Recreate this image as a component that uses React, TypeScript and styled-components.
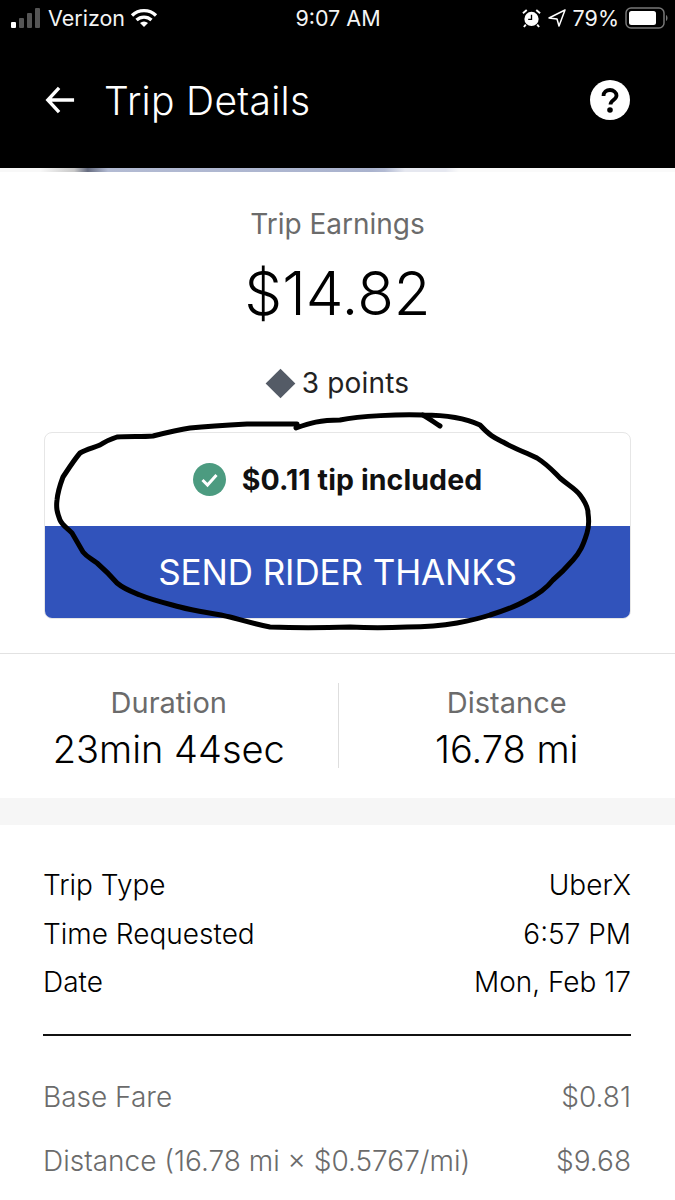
import React from 'react';
import styled, { createGlobalStyle } from 'styled-components';

const GlobalStyle = createGlobalStyle`
  html, body {
    margin: 0;
    padding: 0;
    background: #fff;
    font-family: Inter, "Liberation Sans", sans-serif;
  }
`;

const Screen = styled.div`
  position: relative;
  width: 675px;
  height: 1200px;
  overflow: hidden;
  background: #fff;
`;

const Header = styled.header`
  height: 168px;
  background: #000;
  color: #fff;
  display: flex;
  flex-direction: column;
`;

const StatusBar = styled.div`
  height: 36px;
  display: grid;
  grid-template-columns: 1fr auto 1fr;
  align-items: center;
  padding: 0 6px 0 7px;
  font-size: 21.5px;
  color: #f4f4f4;
`;

const StatusGroup = styled.div<{ $end?: boolean }>`
  display: flex;
  align-items: center;
  gap: ${(p) => (p.$end ? '6px' : '5px')};
  padding-left: ${(p) => (p.$end ? '0' : '4px')};
  justify-content: ${(p) => (p.$end ? 'flex-end' : 'flex-start')};
`;

const NavBar = styled.div`
  display: flex;
  align-items: center;
  height: 60px;
  margin-top: 34px;
  padding: 0 45px;
`;

const Title = styled.h1`
  margin: 0 0 0 29px;
  flex: 1;
  font-size: 39px;
  font-weight: 300;
  letter-spacing: 0.3px;
`;

const MapStrip = styled.div`
  height: 4px;
  background: linear-gradient(90deg, #f8f8f8 0, #f8f8f8 6%, #c8c8c8 11%, #666c80 13%, #b3bbd3 16%, #aab3ce 55%, #b3bbd3 57%, #e6e8f0 60%, #e6e8f0 66%, #fafafa 68%, #fafafa 100%);
`;

const Earnings = styled.section`
  display: flex;
  flex-direction: column;
  align-items: center;
  padding-top: 34px;
`;

const EarningsLabel = styled.div`
  font-size: 28px;
  line-height: 36px;
  color: #6b6b6b;
`;

const Amount = styled.div`
  margin-top: 15px;
  font-size: 60px;
  line-height: 72px;
  font-weight: 300;
  color: #000;
`;

const Points = styled.div`
  margin-top: 36px;
  display: flex;
  align-items: center;
  gap: 7px;
  font-size: 28px;
  line-height: 36px;
  letter-spacing: 0.2px;
  color: #222;
`;

const Diamond = styled.span`
  width: 21px;
  height: 21px;
  background: #545b66;
  transform: rotate(45deg);
  margin: 0 4px;
`;

const TipCard = styled.div`
  margin: 31px 44px 0;
  border: 1px solid #e6e6e6;
  border-radius: 8px;
  overflow: hidden;
`;

const TipRow = styled.div`
  height: 93px;
  display: flex;
  align-items: center;
  justify-content: center;
  gap: 16px;
  font-size: 28.5px;
  font-weight: 700;
  letter-spacing: 0.1px;
  color: #111;
`;

const ThanksButton = styled.button`
  display: block;
  width: 100%;
  height: 92px;
  border: 0;
  background: #3153bb;
  color: #fff;
  font: 400 35px Inter, "Liberation Sans", sans-serif;
  letter-spacing: -0.1px;
`;

const Stats = styled.section`
  margin-top: 34px;
  border-top: 1px solid #e2e2e2;
  padding: 29px 0 30px;
  display: grid;
  grid-template-columns: 1fr 1fr;
`;

const Stat = styled.div<{ $divided?: boolean }>`
  height: 85px;
  text-align: center;
  border-left: ${(p) => (p.$divided ? '1px solid #dedede' : '0')};
`;

const StatLabel = styled.div`
  font-size: 29px;
  line-height: 40px;
  color: #6b6b6b;
`;

const StatValue = styled.div`
  font-size: 38px;
  line-height: 52px;
  font-weight: 300;
  color: #000;
`;

const Band = styled.div`
  height: 27px;
  background: #f6f6f6;
`;

const Details = styled.section`
  padding: 36px 44px 0 43px;
`;

const Row = styled.div<{ $muted?: boolean; $height: number }>`
  display: flex;
  justify-content: space-between;
  align-items: center;
  height: ${(p) => p.$height}px;
  font-size: 28px;
  font-weight: 300;
  color: ${(p) => (p.$muted ? '#6b6b6b' : '#000')};
`;

const Rule = styled.hr`
  margin: 28px 0 37px;
  border: 0;
  border-top: 2px solid #111;
`;

const Scribble = styled.svg`
  position: absolute;
  left: 0;
  top: 0;
  pointer-events: none;
`;

const SignalIcon = () => (
  <svg width="32" height="22" viewBox="0 0 32 22">
    <rect x="0" y="15" width="5" height="6" rx="1" fill="#fff" />
    <rect x="8" y="11" width="5" height="10" rx="1" fill="#555" />
    <rect x="16" y="6" width="5" height="15" rx="1" fill="#555" />
    <rect x="24" y="1" width="5" height="20" rx="1" fill="#555" />
  </svg>
);

const WifiIcon = () => (
  <svg width="28" height="20" viewBox="0 0 28 20" fill="none" stroke="#fff" strokeWidth="3.2">
    <path d="M2 7.5a17 17 0 0 1 24 0" />
    <path d="M6.5 12a11 11 0 0 1 15 0" />
    <path d="M14 19l-4-4a6 6 0 0 1 8 0z" fill="#fff" stroke="none" />
  </svg>
);

const AlarmIcon = () => (
  <svg width="19" height="20" viewBox="0 0 20 20">
    <circle cx="10" cy="11" r="7.5" fill="#fff" />
    <path d="M10 6.5V11.5H6.5" fill="none" stroke="#000" strokeWidth="1.4" />
    <path d="M1 5l4-3.5M19 5l-4-3.5M4 17l-2 2.5M16 17l2 2.5" stroke="#fff" strokeWidth="2" />
  </svg>
);

const LocationIcon = () => (
  <svg width="20" height="20" viewBox="0 0 20 20" fill="none" stroke="#fff" strokeWidth="1.5" strokeLinejoin="round">
    <path d="M18 2L2 10l8 1 2 7z" />
  </svg>
);

const BatteryIcon = () => (
  <svg width="44" height="22" viewBox="0 0 44 22">
    <rect x="1" y="1" width="38" height="20" rx="5" fill="none" stroke="#777" strokeWidth="1.5" />
    <rect x="4" y="4" width="27" height="14" rx="2.5" fill="#fff" />
    <path d="M41 8c2 1 2 5 0 6z" fill="#777" />
  </svg>
);

const BackIcon = () => (
  <svg width="30" height="30" viewBox="0 0 32 30" fill="none" stroke="#fff" strokeWidth="3.6">
    <path d="M31 15H3M15 2L3 15l12 13" />
  </svg>
);

const HelpIcon = () => (
  <svg width="40" height="40" viewBox="0 0 40 40">
    <circle cx="20" cy="20" r="20" fill="#fff" />
    <path d="M13.5 16c0-4 3-6 6.5-6s6.5 2.5 6.5 5.5c0 4.5-6 4.5-6 9" fill="none" stroke="#000" strokeWidth="3.8" />
    <circle cx="20" cy="30" r="2.8" fill="#000" />
  </svg>
);

const CheckIcon = () => (
  <svg width="33" height="33" viewBox="0 0 33 33">
    <circle cx="16.5" cy="16.5" r="16.5" fill="#4c9b80" />
    <path d="M9.5 17l5 5 9-10" fill="none" stroke="#fff" strokeWidth="3" />
  </svg>
);

export default function App() {
  return (
    <Screen>
      <GlobalStyle />
      <Header>
        <StatusBar>
          <StatusGroup>
            <SignalIcon />
            <span>Verizon</span>
            <WifiIcon />
          </StatusGroup>
          <span>9:07 AM</span>
          <StatusGroup $end>
            <AlarmIcon />
            <LocationIcon />
            <span>79%</span>
            <BatteryIcon />
          </StatusGroup>
        </StatusBar>
        <NavBar>
          <BackIcon />
          <Title>Trip Details</Title>
          <HelpIcon />
        </NavBar>
      </Header>
      <MapStrip />
      <Earnings>
        <EarningsLabel>Trip Earnings</EarningsLabel>
        <Amount>$14.82</Amount>
        <Points>
          <Diamond />3 points
        </Points>
      </Earnings>
      <TipCard>
        <TipRow>
          <CheckIcon />
          $0.11 tip included
        </TipRow>
        <ThanksButton>SEND RIDER THANKS</ThanksButton>
      </TipCard>
      <Stats>
        <Stat>
          <StatLabel>Duration</StatLabel>
          <StatValue>23min 44sec</StatValue>
        </Stat>
        <Stat $divided>
          <StatLabel>Distance</StatLabel>
          <StatValue>16.78 mi</StatValue>
        </Stat>
      </Stats>
      <Band />
      <Details>
        <Row $height={48}><span>Trip Type</span><span>UberX</span></Row>
        <Row $height={49}><span>Time Requested</span><span>6:57 PM</span></Row>
        <Row $height={48}><span>Date</span><span>Mon, Feb 17</span></Row>
        <Rule />
        <Row $muted $height={48}><span>Base Fare</span><span>$0.81</span></Row>
        <Row $muted $height={80}><span>Distance (16.78 mi × $0.5767/mi)</span><span>$9.68</span></Row>
      </Details>
      <Scribble width="675" height="1200" viewBox="0 0 675 1200" fill="none" stroke="#000" strokeWidth="5" strokeLinecap="round" strokeLinejoin="round">
        <path d="M296 428C310 423 320 420 340 420C360 416 400 414 423 415C445 415 465 418 480 425C490 436 495 438 503 442C515 449 525 452 537 458C548 465 552 470 560 478C568 485 576 489 580 495C586 503 588 508 588 513C589 520 589 527 587 533C583 546 580 552 573 560C566 568 560 574 553 580C545 590 537 595 527 600C515 607 503 611 490 615C478 619 468 621 457 623C440 626 425 627 407 627C385 628 370 628 350 627C320 628 295 628 270 627C255 624 245 621 230 617C215 613 198 612 180 607C165 603 152 600 140 595C130 591 124 589 117 583C110 575 105 570 97 563C90 558 87 557 83 552C79 545 76 540 72 533C67 528 62 525 60 520C57 512 56 508 57 500C58 490 60 485 63 477C69 468 74 460 80 453C87 449 93 448 100 445C106 441 111 439 117 437C130 436 141 437 153 436C165 433 177 430 190 428C210 426 228 425 247 424C265 424 280 424 297 424" />
        <path d="M423 415C430 419 435 423 440 426" />
      </Scribble>
    </Screen>
  );
}
